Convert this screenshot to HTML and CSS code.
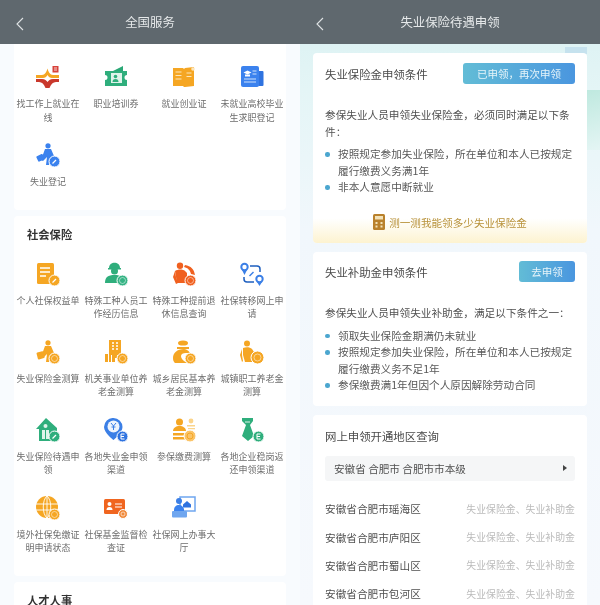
FILE: index.html
```html
<!DOCTYPE html>
<html lang="zh-CN">
<head>
<meta charset="utf-8">
<title>全国服务</title>
<link rel="stylesheet" href="styles.css">
</head>
<body>
<svg class="defs" aria-hidden="true">
  <symbol id="back" viewBox="0 0 10 16"><path d="M8 2 2 8l6 6" fill="none" stroke="#dfe3e5" stroke-width="1.1"/></symbol>
  <g id="coin"><circle cx="18.5" cy="18.5" r="5.5" stroke="#fff" stroke-width="1"/><circle cx="18.5" cy="18.5" r="3" fill="none" stroke="#fff" stroke-opacity=".55" stroke-width=".9"/></g>
  <g id="pen"><circle cx="18.5" cy="18.5" r="5.5" stroke="#fff" stroke-width="1"/><path d="m16.5 20.5 3.5-3.500" stroke="#fff" stroke-width="1.300"/></g>
  <g id="euro"><circle cx="18.5" cy="18.5" r="5.5" stroke="#fff" stroke-width="1"/><path d="M20.5 16h-3.500v5h3.500M17 18.500h3" fill="none" stroke="#fff" stroke-width="1"/></g>
</svg>

<div class="screen">
  <section class="pane pane-left">
    <header class="bar">
      <svg class="back"><use href="#back"/></svg>
      <h1 class="bar-title">全国服务</h1>
    </header>

    <div class="card card-grid card-first">
      <div class="grid">
        <div class="item">
          <svg class="ico" viewBox="0 0 24 24"><path d="M0 10h6c3 0 4.500-3 5.500-6.500C12.500 7 14 10 17 10h6v3h-7c-2 0-3.500-1-4.500-3-1 2-2.500 3-4.500 3H0z" fill="#f5a623"/><path d="M0 14h6c3 0 4.500 1.500 5.500 3 1-1.500 2.500-3 5.500-3h6v3h-3c-3 0-5 2-6.500 6h-4c-1.500-4-3.500-6-6.500-6H0z" fill="#c9382c"/><rect x="16.500" y="1" width="6" height="6.500" fill="#d8423a"/><path d="M18 3h3M18 5h3" stroke="#fff" stroke-width=".8"/></svg>
          <p class="lbl">找工作上就业在线</p>
        </div>
        <div class="item">
          <svg class="ico" viewBox="0 0 24 24"><path d="M9 6 19 1v5z" fill="#2aa876"/><path d="M1 6h22v4a2 2 0 0 0 0 5v6H1v-6a2 2 0 0 0 0-5z" fill="#2fae7c"/><rect x="7" y="8" width="11" height="10" fill="#dff3ea"/><circle cx="11.500" cy="11.500" r="1.800" fill="#2fae7c"/><path d="M8.500 17c0-2 1-3 3-3s3 1 3 3z" fill="#2fae7c"/></svg>
          <p class="lbl">职业培训券</p>
        </div>
        <div class="item">
          <svg class="ico" viewBox="0 0 24 24"><path d="M1 3h10l1 1 1-1 9-1v19l-9 1-1 0-1-1H1z" fill="#f5a623"/><path d="M3.500 7h6M3.500 10.500h6M3.500 14h6M14.500 8h5M14.500 11.500h5" stroke="#fde6ba" stroke-width="1.200"/><circle cx="21" cy="4" r="1.800" fill="#fde6ba"/></svg>
          <p class="lbl">就业创业证</p>
        </div>
        <div class="item">
          <svg class="ico" viewBox="0 0 24 24"><rect x="18" y="6" width="5.500" height="15" rx="1" fill="#2f73e0"/><rect x="1" y="1" width="18" height="21" rx="2" fill="#3b82ee"/><path d="m7.500 5.500 4 2-4 2-4-2z" fill="#fff"/><path d="M5 9.500h5v2H5z" fill="#fff"/><path d="M12.500 6h4M12.500 9h4M4 14h12M4 17h12" stroke="#cfe1fb" stroke-width="1.100"/></svg>
          <p class="lbl">未就业高校毕业生求职登记</p>
        </div>
        <div class="item">
          <svg class="ico" viewBox="0 0 24 24"><circle cx="12" cy="2.800" r="2.600" fill="#3b82ee"/><path d="M9 6h6l3 7-4 2-1 7h-3l1-8-4 4-2-1z" fill="#3b82ee"/><rect x="1" y="12" width="7" height="6" rx="1" transform="rotate(-25 4 15)" fill="#3b82ee"/><use href="#pen" fill="#3b82ee"/></svg>
          <p class="lbl">失业登记</p>
        </div>
      </div>
    </div>

    <div class="card card-grid">
      <h2 class="sec">社会保险</h2>
      <div class="grid">
        <div class="item">
          <svg class="ico" viewBox="0 0 24 24"><rect x="1" y="1" width="17" height="21" rx="1.500" fill="#f5a623"/><path d="M4 6h10M4 10h10M4 14h6" stroke="#fff" stroke-width="1.400"/><use href="#pen" fill="#f5a623"/></svg>
          <p class="lbl">个人社保权益单</p>
        </div>
        <div class="item">
          <svg class="ico" viewBox="0 0 24 24"><path d="M5 6c0-7 11-7 11 0z" fill="#2fae7c"/><rect x="4" y="6" width="13" height="1.500" fill="#2fae7c"/><circle cx="10.500" cy="9" r="3.500" fill="#2fae7c"/><path d="M1 21c0-6 3-8 9.500-8s9.500 2 9.500 8z" fill="#2fae7c"/><use href="#coin" fill="#35b384"/></svg>
          <p class="lbl">特殊工种人员工作经历信息</p>
        </div>
        <div class="item">
          <svg class="ico" viewBox="0 0 24 24"><circle cx="8" cy="3.800" r="3.200" fill="#f0601f"/><path d="M3 9c3-2 8-2 10 0l2 2v10H5z" fill="#f0601f"/><path d="M13 3c6 1 9 4 10 10l-4-1c-1-4-3-6-7-7z" fill="#f0601f"/><path d="M3 9 1 15l3 7 2-1-2-6z" fill="#f0601f"/><use href="#coin" fill="#f0601f"/></svg>
          <p class="lbl">特殊工种提前退休信息查询</p>
        </div>
        <div class="item">
          <svg class="ico" viewBox="0 0 24 24"><circle cx="4.500" cy="5" r="3.200" fill="none" stroke="#3b7fe6" stroke-width="2"/><path d="M2 8l2.500 5L7 8z" fill="#3b7fe6"/><circle cx="19.500" cy="17" r="3.200" fill="none" stroke="#3b7fe6" stroke-width="2"/><path d="M17 20l2.500 4 2.500-4z" fill="#3b7fe6"/><path d="M10 4h7a3 3 0 0 1 3 3v3M14 20H7a3 3 0 0 1-3-3v-2" fill="none" stroke="#1e5fbf" stroke-width="1.500"/><path d="M9.500 14l4-4" stroke="#3b7fe6" stroke-width="1.500"/></svg>
          <p class="lbl">社保转移网上申请</p>
        </div>

        <div class="item">
          <svg class="ico" viewBox="0 0 24 24"><circle cx="12" cy="2.800" r="2.600" fill="#f5a623"/><path d="M9 6h6l3 7-4 2-1 7h-3l1-8-4 4-2-1z" fill="#f5a623"/><rect x="1" y="12" width="7" height="7" rx="1" transform="rotate(-15 4 15)" fill="#f5a623"/><use href="#coin" fill="#f5a623"/></svg>
          <p class="lbl">失业保险金测算</p>
        </div>
        <div class="item">
          <svg class="ico" viewBox="0 0 24 24"><path d="M5 0h12v15H5z" fill="#f5a623"/><path d="M8 3h2M12 3h2M8 6h2M12 6h2M8 9h2M12 9h2" stroke="#fff" stroke-width="1.300"/><path d="M1 14h3v8H1zM5 15h2v7H5zM8 15h5v3H11v4H8z" fill="#f5a623"/><use href="#coin" fill="#f5a623"/></svg>
          <p class="lbl">机关事业单位养老金测算</p>
        </div>
        <div class="item">
          <svg class="ico" viewBox="0 0 24 24"><ellipse cx="11" cy="3" rx="5" ry="2.600" fill="#f5a623"/><path d="M5 7h12v2H5z" fill="#f5a623"/><path d="M12 9c-7 0-11 4-11 9 0 3 1 4 2 5h12c-3-2-6-4-6-7 0-2 2-3 5-3h4c-2-3-4-4-6-4z" fill="#f5a623"/><use href="#coin" fill="#f5a623"/></svg>
          <p class="lbl">城乡居民基本养老金测算</p>
        </div>
        <div class="item">
          <svg class="ico" viewBox="0 0 24 24"><circle cx="7" cy="3.500" r="3" fill="#f5a623"/><path d="M3 8c3-1 7-1 9 1l2 3-1 10H5L3 15z" fill="#f5a623"/><path d="M2 9 0 15l2 7 1-1-1-6z" fill="#f5a623"/><circle cx="17.500" cy="17.500" r="6.500" fill="#f5a623" stroke="#fff"/><circle cx="17.500" cy="17.500" r="3.500" fill="none" stroke="#fff" stroke-opacity=".5"/></svg>
          <p class="lbl">城镇职工养老金测算</p>
        </div>

        <div class="item">
          <svg class="ico" viewBox="0 0 24 24"><path d="M10 0 21 10v3H17v10H3V11H0z" fill="#2fae7c"/><path d="M6 12h7v9H6z" fill="#dff3ea"/><circle cx="9.500" cy="8" r="2" fill="#dff3ea"/><path d="M9.500 12v9" stroke="#2fae7c"/><use href="#pen" fill="#2fae7c"/></svg>
          <p class="lbl">失业保险待遇申领</p>
        </div>
        <div class="item">
          <svg class="ico" viewBox="0 0 24 24"><path d="M9.500 0a9 9 0 0 1 9 9c0 6-9 13-9 13S0 15 0 9a9 9 0 0 1 9.500-9z" fill="#3b7fe6"/><circle cx="9.500" cy="8.500" r="6" fill="#eef4fd"/><path d="m7 5 2.500 3L12 5M9.500 8v4M7.500 9h4" fill="none" stroke="#3b7fe6"/><use href="#euro" fill="#2f73e0"/></svg>
          <p class="lbl">各地失业金申领渠道</p>
        </div>
        <div class="item">
          <svg class="ico" viewBox="0 0 24 24"><circle cx="7.500" cy="4" r="3.500" fill="#f5a623"/><path d="M1 13c0-3 3-5 6.500-5s6.500 2 6.500 5z" fill="#f5a623"/><path d="M1 15h13v2.500H1zM1 19h13v2.500H1z" fill="#f5a623"/><circle cx="19" cy="3" r="2.400" fill="#fbd48a"/><path d="M15 7h8v1.500h-8zM16 10h7v1.200h-7z" fill="#fbd48a"/><circle cx="18" cy="18" r="6" fill="#fbc468" stroke="#fff"/><circle cx="18" cy="18" r="3" fill="none" stroke="#f5a623"/></svg>
          <p class="lbl">参保缴费测算</p>
        </div>
        <div class="item">
          <svg class="ico" viewBox="0 0 24 24"><path d="M2 0h11v3l-3 4 4 11-6 5-6-5L6 7 2 3z" fill="#2fae7c"/><path d="M5 4h5" stroke="#dff3ea"/><use href="#euro" fill="#2fae7c"/></svg>
          <p class="lbl">各地企业稳岗返还申领渠道</p>
        </div>

        <div class="item">
          <svg class="ico" viewBox="0 0 24 24"><circle cx="11" cy="11" r="11" fill="#f5a623"/><path d="M0 8h22M0 14h22M11 0v22M11 0C6 4 6 18 11 22M11 0c5 4 5 18 0 22" fill="none" stroke="#fff" stroke-width=".9"/><use href="#coin" fill="#f5a623"/></svg>
          <p class="lbl">境外社保免缴证明申请状态</p>
        </div>
        <div class="item">
          <svg class="ico" viewBox="0 0 24 24"><rect x="0" y="3" width="21" height="15" rx="1.500" fill="#f0651f"/><circle cx="5.500" cy="8" r="2" fill="#fff"/><path d="M2.500 14c0-2 1-3 3-3s3 1 3 3z" fill="#fff"/><path d="M11 8h7M11 11h7" stroke="#fff" stroke-width="1.100"/><circle cx="19" cy="18" r="4.500" fill="#f08a3c" stroke="#fff"/><circle cx="19" cy="18" r="2" fill="none" stroke="#fff" stroke-opacity=".6"/></svg>
          <p class="lbl">社保基金监督检查证</p>
        </div>
        <div class="item">
          <svg class="ico" viewBox="0 0 24 24"><rect x="8" y="1" width="15" height="14" fill="#fff" stroke="#6fa6ef" stroke-width="1.500"/><path d="m15 5 4 3.500v3h-8v-3z" fill="#2f73e0"/><circle cx="7" cy="5" r="3" fill="#3b7fe6"/><path d="M2 14c0-3 2-5 5-5s4 2 5 4v3H2z" fill="#3b82ee"/><rect x="0" y="15" width="15" height="6.500" rx="1" fill="#6fa6ef"/></svg>
          <p class="lbl">社保网上办事大厅</p>
        </div>
      </div>
    </div>

    <div class="card card-grid">
      <h2 class="sec">人才人事</h2>
    </div>
  </section>

  <section class="pane pane-right">
    <header class="bar">
      <svg class="back"><use href="#back"/></svg>
      <h1 class="bar-title">失业保险待遇申领</h1>
    </header>
    <div class="deco deco-top"></div>
    <div class="deco deco-side"></div>

    <div class="stack">
      <article class="panel panel-claim">
        <div class="panel-head">
          <h2 class="panel-title">失业保险金申领条件</h2>
          <span class="btn btn-wide">已申领，再次申领</span>
        </div>
        <p class="intro">参保失业人员申领失业保险金，必须同时满足以下条件：</p>
        <ul class="points">
          <li>按照规定参加失业保险，所在单位和本人已按规定履行缴费义务满1年</li>
          <li>非本人意愿中断就业</li>
        </ul>
        <div class="calc">
          <svg class="calc-ico" viewBox="0 0 12 16"><rect width="12" height="16" rx="1.500" fill="#b9812c"/><rect x="2" y="2" width="8" height="3.500" fill="#f3e2b8"/><path d="M2.500 8h2v2h-2zM7.500 8h2v2h-2zM2.500 11.500h2v2h-2zM7.500 11.500h2v2h-2z" fill="#f3e2b8"/></svg>
          <span class="calc-text">测一测我能领多少失业保险金</span>
        </div>
      </article>

      <article class="panel panel-aid">
        <div class="panel-head">
          <h2 class="panel-title">失业补助金申领条件</h2>
          <span class="btn btn-small">去申领</span>
        </div>
        <p class="intro">参保失业人员申领失业补助金，满足以下条件之一：</p>
        <ul class="points">
          <li>领取失业保险金期满仍未就业</li>
          <li>按照规定参加失业保险，所在单位和本人已按规定履行缴费义务不足1年</li>
          <li>参保缴费满1年但因个人原因解除劳动合同</li>
        </ul>
      </article>

      <article class="panel panel-area">
        <h2 class="panel-title">网上申领开通地区查询</h2>
        <div class="select">
          <span>安徽省 合肥市 合肥市市本级</span>
          <span class="caret"></span>
        </div>
        <ul class="areas">
          <li><span class="area-name">安徽省合肥市瑶海区</span><span class="area-tag">失业保险金、失业补助金</span></li>
          <li><span class="area-name">安徽省合肥市庐阳区</span><span class="area-tag">失业保险金、失业补助金</span></li>
          <li><span class="area-name">安徽省合肥市蜀山区</span><span class="area-tag">失业保险金、失业补助金</span></li>
          <li><span class="area-name">安徽省合肥市包河区</span><span class="area-tag">失业保险金、失业补助金</span></li>
        </ul>
      </article>
    </div>
  </section>
</div>
</body>
</html>
```

FILE: styles.css
```css
* { box-sizing: border-box; margin: 0; padding: 0; }
html, body { width: 600px; height: 605px; overflow: hidden; background: #fff; }
body { font-family: "Noto Sans CJK SC", "Noto Sans", sans-serif; color: #444; }
.defs { position: absolute; width: 0; height: 0; overflow: hidden; }

.screen { display: flex; width: 600px; height: 605px; overflow: hidden; filter: blur(0.35px); }
.pane { position: relative; width: 300px; height: 605px; overflow: hidden; flex: none; }
.pane-left { background: #f8fbfe; }
.pane-right { background: linear-gradient(#d9f1f2 0, #e4f5f6 90px, #f1f7fc 230px, #f6f9fd 100%); }

.bar { position: relative; z-index: 2; display: flex; align-items: center; justify-content: center; height: 44px; background: #5f686e; }
.bar-title { font-size: 12.4px; font-weight: 400; color: #e6e9ea; }
.back { position: absolute; left: 15px; top: 16px; width: 10px; height: 16px; }

.card-grid { margin: 0 14px 6px; background: #fff; border-radius: 4px; padding: 10px 0 21px; }
.card-first { padding-top: 21px; border-radius: 0 0 4px 4px; }
.sec { font-size: 11.3px; line-height: 16px; font-weight: 700; color: #333; padding-left: 13px; margin-bottom: 20px; }
.grid { display: grid; grid-template-columns: repeat(4, 68px); row-gap: 19px; }
.item { display: flex; flex-direction: column; align-items: center; }
.ico { display: block; width: 24px; height: 24px; margin-bottom: 8px; }
.lbl { width: 64px; font-size: 9px; line-height: 13.5px; color: #6e6e6e; text-align: center; }

.deco { position: absolute; }
.deco-top { right: 13px; top: 47px; width: 22px; height: 7px; background: #c6e2ee; }
.deco-side { right: 0; top: 90px; width: 13px; height: 60px; background: linear-gradient(165deg, #bfe9df, #e4f5f4); }

.stack { position: relative; display: flex; flex-direction: column; gap: 9px; padding: 9px 13px 0; }
.panel { background: #fff; border-radius: 4px; padding: 0 12px; }
.panel-claim { padding-top: 10px; height: 190px; position: relative; overflow: hidden; }
.panel-aid { padding-top: 9px; padding-bottom: 12px; }
.panel-area { padding-top: 13px; padding-bottom: 10px; }
.panel-head { display: flex; align-items: center; justify-content: space-between; height: 21px; }
.panel-title { font-size: 11.4px; line-height: 16px; font-weight: 400; color: #4a4a4a; }
.btn { display: flex; align-items: center; justify-content: center; height: 21px; border-radius: 3px; font-size: 10.5px; color: #e6f4f9; background: linear-gradient(90deg, #62bcd6, #4a96df); }
.btn-wide { width: 112px; }
.btn-small { width: 56px; }
.intro { margin-top: 23px; font-size: 10.65px; line-height: 16.5px; color: #505050; }
.points { list-style: none; margin-top: 6px; }
.points li { position: relative; padding-left: 13px; font-size: 10.65px; line-height: 16.5px; color: #585858; }
.points li::before { content: ""; position: absolute; left: 0; top: 6px; width: 4.5px; height: 4.5px; border-radius: 50%; background: #4ba6cf; }
.calc { position: absolute; left: 0; right: 0; bottom: 0; height: 38px; padding-bottom: 4px; display: flex; align-items: center; justify-content: center; gap: 4px; background: linear-gradient(#fff 35%, #fdf3d0); }
.calc-ico { width: 12px; height: 16px; }
.calc-text { font-size: 10.6px; color: #b8923a; }

.select { display: flex; align-items: center; justify-content: space-between; height: 25px; margin-top: 12px; padding: 0 8px 0 9px; background: #f5f6f7; border-radius: 3px; font-size: 10.6px; color: #505050; }
.caret { width: 0; height: 0; border-left: 4px solid #444; border-top: 3.5px solid transparent; border-bottom: 3.5px solid transparent; }
.areas { list-style: none; margin-top: 14px; }
.areas li { display: flex; align-items: center; justify-content: space-between; height: 28.4px; }
.area-name { font-size: 10.65px; color: #505050; }
.area-tag { font-size: 9.9px; color: #bbb; }
```
